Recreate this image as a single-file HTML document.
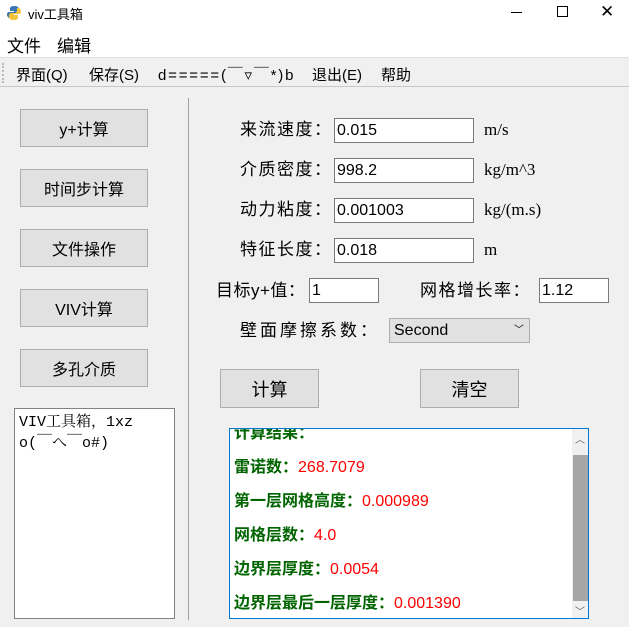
<!DOCTYPE html>
<html><head><meta charset="utf-8"><style>
*{margin:0;padding:0;box-sizing:border-box}
body{width:629px;height:627px;background:#f0f0f0;position:relative;overflow:hidden;font-family:"Liberation Sans","Noto Sans CJK SC",sans-serif;color:#000}
.a{position:absolute;white-space:nowrap}
.btn{position:absolute;background:#e1e1e1;border:1px solid #adadad;font-size:16px;display:flex;align-items:center;justify-content:center}
.inp{position:absolute;background:#fff;border:1px solid #7a7a7a;font-size:16px;padding-left:2px;line-height:23px}
.lbl{position:absolute;font-size:17px;letter-spacing:1.5px;white-space:nowrap;line-height:24px}
.unit{position:absolute;font-family:"Liberation Serif",serif;font-size:17px;line-height:24px}
.g{color:#006400;font-weight:bold}
.r{color:#ff0000}
</style></head><body>
<div class="a" style="left:0;top:0;width:629px;height:57px;background:#fff"></div>
<svg class="a" style="left:6px;top:5px" width="16" height="16" viewBox="0 0 16 16"><path d="M8 1C4 1 4 3 4 4v2h4v1H3C1 7 1 9 1 10s1 3 3 3h1v-2c0-2 1-3 3-3h3c1 0 2-1 2-2V4c0-2-2-3-5-3z" fill="#3a76b0"/><path d="M8 15c4 0 4-2 4-3v-2H8V9h5c2 0 2-2 2-3s-1-3-3-3h-1v2c0 2-1 3-3 3H5c-1 0-2 1-2 2v2c0 2 2 3 5 3z" fill="#f3c43b"/></svg>
<div class="a" style="left:28px;top:4px;font-size:13px">viv工具箱</div>
<div class="a" style="left:511px;top:12px;width:11px;height:1px;background:#000"></div>
<div class="a" style="left:557px;top:6px;width:11px;height:11px;border:1px solid #000"></div>
<div class="a" style="left:600px;top:2px;font-size:17px;font-weight:300">✕</div>
<div class="a" style="left:7px;top:32px;font-size:17px">文件</div>
<div class="a" style="left:57px;top:32px;font-size:17px">编辑</div>
<div class="a" style="left:0;top:57px;width:629px;height:30px;background:#f0f0f0;border-top:1px solid #e0e0e0;border-bottom:1px solid #c8c8c8"></div>
<div class="a" style="left:2px;top:63px;width:2px;height:20px;border-left:2px dotted #bbb"></div>
<div class="a" style="left:16px;top:64px;font-size:15px">界面(Q)</div>
<div class="a" style="left:89px;top:64px;font-size:15px">保存(S)</div>
<div class="a" style="left:158px;top:64px;font-size:15px;letter-spacing:1.8px">d=====(￣▿￣*)b</div>
<div class="a" style="left:312px;top:64px;font-size:15px">退出(E)</div>
<div class="a" style="left:381px;top:64px;font-size:15px">帮助</div>

<div class="btn" style="left:20px;top:109px;width:128px;height:38px">y+计算</div>
<div class="btn" style="left:20px;top:169px;width:128px;height:38px">时间步计算</div>
<div class="btn" style="left:20px;top:229px;width:128px;height:38px">文件操作</div>
<div class="btn" style="left:20px;top:289px;width:128px;height:38px">VIV计算</div>
<div class="btn" style="left:20px;top:349px;width:128px;height:38px">多孔介质</div>
<div class="a" style="left:14px;top:408px;width:161px;height:211px;background:#fff;border:1px solid #828282;font-family:'Liberation Mono','Noto Serif CJK SC',monospace;font-size:15px;line-height:21px;padding:3px 4px">VIV工具箱，1xz<br>o(￣へ￣o#)</div>
<div class="a" style="left:188px;top:98px;width:1px;height:522px;background:#a0a0a0"></div>

<div class="lbl" style="left:240px;top:118px">来流速度：</div>
<div class="inp" style="left:334px;top:118px;width:140px;height:25px">0.015</div>
<div class="unit" style="left:484px;top:118px">m/s</div>
<div class="lbl" style="left:240px;top:158px">介质密度：</div>
<div class="inp" style="left:334px;top:158px;width:140px;height:25px">998.2</div>
<div class="unit" style="left:484px;top:158px">kg/m^3</div>
<div class="lbl" style="left:240px;top:198px">动力粘度：</div>
<div class="inp" style="left:334px;top:198px;width:140px;height:25px">0.001003</div>
<div class="unit" style="left:484px;top:198px">kg/(m.s)</div>
<div class="lbl" style="left:240px;top:238px">特征长度：</div>
<div class="inp" style="left:334px;top:238px;width:140px;height:25px">0.018</div>
<div class="unit" style="left:484px;top:238px">m</div>

<div class="lbl" style="left:216px;top:279px;letter-spacing:0.5px">目标y+值：</div>
<div class="inp" style="left:309px;top:278px;width:70px;height:25px">1</div>
<div class="lbl" style="left:420px;top:279px">网格增长率：</div>
<div class="inp" style="left:539px;top:278px;width:70px;height:25px">1.12</div>
<div class="lbl" style="left:240px;top:319px;letter-spacing:3px">壁面摩擦系数：</div>
<div class="a" style="left:389px;top:318px;width:141px;height:25px;background:#e1e1e1;border:1px solid #adadad;font-size:16px;padding-left:4px;line-height:23px">Second<span style="position:absolute;right:5px;top:0;font-size:10px">﹀</span></div>

<div class="btn" style="left:220px;top:369px;width:99px;height:39px;font-size:18px">计算</div>
<div class="btn" style="left:420px;top:369px;width:99px;height:39px;font-size:18px">清空</div>

<div class="a" style="left:229px;top:428px;width:360px;height:191px;background:#fff;border:1px solid #0078d7;overflow:hidden">
<div class="a" style="left:4px;top:-12px;font-size:16px;line-height:34px"><span class="g">计算结果：</span><br><span class="g">雷诺数：</span><span class="r">268.7079</span><br><span class="g">第一层网格高度：</span><span class="r">0.000989</span><br><span class="g">网格层数：</span><span class="r">4.0</span><br><span class="g">边界层厚度：</span><span class="r">0.0054</span><br><span class="g">边界层最后一层厚度：</span><span class="r">0.001390</span></div>
<div class="a" style="left:342px;top:0;width:17px;height:189px;background:#f0f0f0"></div>
<div class="a" style="left:343px;top:26px;width:15px;height:146px;background:#a6a6a6"></div>
<div class="a" style="left:345px;top:2px;font-size:10px;color:#606060">︿</div>
<div class="a" style="left:345px;top:174px;font-size:10px;color:#606060">﹀</div>
</div>
</body></html>
